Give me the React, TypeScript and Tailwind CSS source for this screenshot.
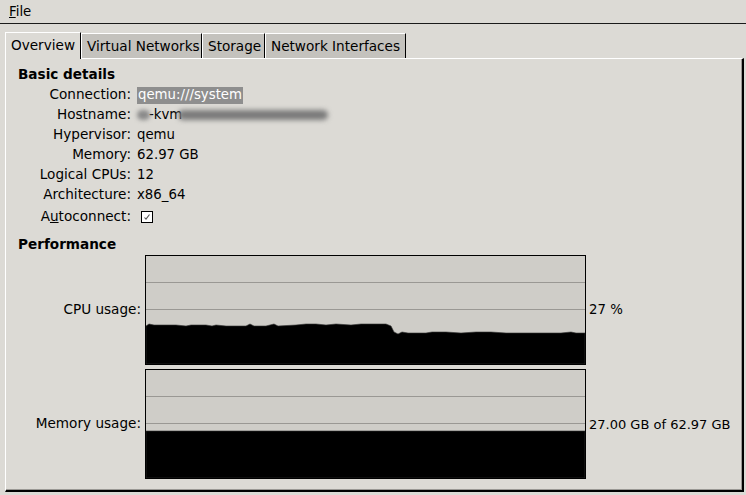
import React from "react";

function Tab({ label, active, w }: { label: string; active?: boolean; w: string }) {
  return (
    <div
      className={
        "flex items-center pl-[5px] border-l border-t border-r border-l-white border-t-white border-r-black " +
        w +
        " " +
        (active ? "h-[27px] bg-[#dcdad5] relative z-10 -mb-px" : "h-[25px] bg-[#c4c2bd]")
      }
    >
      <span className={active ? "mt-[0px]" : "mt-[1px]"}>{label}</span>
    </div>
  );
}

function Row({ label, children, h = "h-[20px]" }: { label: React.ReactNode; children: React.ReactNode; h?: string }) {
  return (
    <div className={"flex items-center " + h}>
      <div className="w-[113px] text-right text-[13.6px]">{label}</div>
      <div className="ml-[6px] flex items-center">{children}</div>
    </div>
  );
}

const cpuPts: [number, number][] = [
  [0, 70], [3, 68], [8, 69], [30, 69], [40, 70], [45, 69], [60, 69], [66, 70], [70, 69], [80, 70],
  [100, 70], [104, 68], [108, 70], [120, 70], [128, 68], [132, 70], [150, 69], [160, 68], [170, 68],
  [180, 69], [190, 68], [205, 69], [215, 68], [240, 68], [245, 70], [248, 76], [252, 78], [256, 76],
  [262, 77], [280, 77], [286, 76], [300, 76], [315, 77], [330, 76], [345, 76], [360, 77], [380, 77],
  [400, 77], [415, 77], [425, 76], [430, 77], [439, 77],
];

function Graph({ kind }: { kind: "cpu" | "mem" }) {
  const d =
    kind === "cpu"
      ? "M" + cpuPts.map((p) => p.join(",")).join(" L") + " L439,108 L0,108 Z"
      : "M0,61 L439,61 L439,108 L0,108 Z";
  return (
    <div className="w-[441px] h-[110px] border border-black bg-[#cfcdc8]">
      <svg width="439" height="108" viewBox="0 0 439 108" className="block">
        <line x1="0" y1="26.5" x2="439" y2="26.5" stroke="#9a9894" strokeWidth="1" />
        <line x1="0" y1="53.5" x2="439" y2="53.5" stroke="#9a9894" strokeWidth="1" />
        <line x1="0" y1="80.5" x2="439" y2="80.5" stroke="#9a9894" strokeWidth="1" />
        <path d={d} fill="#000" stroke="#333" strokeWidth="0.6" />
      </svg>
    </div>
  );
}

export default function App() {
  return (
    <div className="w-[746px] h-[495px] bg-[#dcdad5] text-black text-[13.3px] leading-none font-['DejaVu_Sans',sans-serif] overflow-hidden">
      <div className="h-[24px] border-b border-[#1a1a1a] flex items-center pl-[9px]">
        <span>
          <span className="underline">F</span>ile
        </span>
      </div>
      <div className="pt-[8px] pl-[5px] flex items-end text-[13.6px]">
        <Tab label="Overview" active w="w-[76px]" />
        <Tab label="Virtual Networks" w="w-[121px]" />
        <Tab label="Storage" w="w-[63px]" />
        <Tab label="Network Interfaces" w="w-[141px]" />
      </div>
      <div className="ml-[5px] w-[739px] h-[434px] border-t border-l border-t-white border-l-white border-r-2 border-b-2 border-r-black border-b-black">
        <div className="h-full border-r border-b border-r-[#9a9894] border-b-[#9a9894] pl-[12px] pt-[6px]">
          <div className="h-[20px] flex items-center font-bold text-[13.6px]">Basic details</div>
          <Row label="Connection:">
            <span className="bg-[#8e8e8e] text-white h-[17px] flex items-center px-[1px]">qemu:///system</span>
          </Row>
          <Row label="Hostname:">
            <span className="flex items-center">
              <span className="inline-block w-[13px] h-[10px] bg-[#8a8a8a] blur-[2px] rounded-full" />
              <span className="-ml-[1px]">-kvm</span>
              <span className="inline-block w-[150px] h-[10px] bg-[#7a7a7a] blur-[2.5px] rounded-full -ml-[4px]" />
            </span>
          </Row>
          <Row label="Hypervisor:">qemu</Row>
          <Row label="Memory:">62.97 GB</Row>
          <Row label="Logical CPUs:">12</Row>
          <Row label="Architecture:">x86_64</Row>
          <Row label={<span>A<span className="underline">u</span>toconnect:</span>} h="h-[24px]">
            <span className="ml-[4px] w-[12px] h-[12px] border border-black bg-white flex items-center justify-center">
              <svg width="10" height="10" viewBox="0 0 10 10">
                <path d="M2.5,5.5 L4,7.2 L7.5,2.5" stroke="#555" strokeWidth="1.1" fill="none" />
              </svg>
            </span>
          </Row>
          <div className="h-[20px] mt-[6px] flex items-center font-bold text-[13.6px]">Performance</div>
          <div className="grid grid-cols-[123px_441px_auto] gap-x-[4px] gap-y-[4px] items-center">
            <div className="text-right text-[13.6px]">CPU usage:</div>
            <Graph kind="cpu" />
            <div className="-ml-[1px]">27 %</div>
            <div className="text-right text-[13.6px]">Memory usage:</div>
            <Graph kind="mem" />
            <div className="-ml-[1px] text-[13px]">27.00 GB of 62.97 GB</div>
          </div>
        </div>
      </div>
    </div>
  );
}
